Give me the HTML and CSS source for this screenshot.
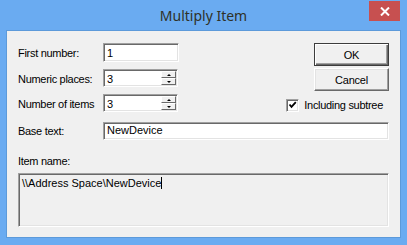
FILE: index.html
```html
<!DOCTYPE html>
<html lang="en">
<head>
    <meta charset="UTF-8">
    <meta name="viewport" content="width=device-width, initial-scale=1.0">
    <title>Multiply Item</title>
    <link rel="stylesheet" href="styles.css">
</head>
<body>
    <div class="window">
        <div class="titlebar">
            <span class="title">Multiply Item</span>
            <button class="close" aria-label="Close">
                <svg width="10" height="9" viewBox="0 0 10 9">
                    <path d="M1 0.5 L9 8.5 M9 0.5 L1 8.5" stroke="#fff" stroke-width="2"/>
                </svg>
            </button>
        </div>
        <div class="client">
            <div class="top">
                <div class="fields">
                    <label>First number:</label>
                    <div class="edit first">1</div>
                    <label>Numeric places:</label>
                    <div class="edit spin">
                        <span>3</span>
                        <span class="spinbtns">
                            <span class="sbtn"><i class="up"></i></span>
                            <span class="sbtn"><i class="down"></i></span>
                        </span>
                    </div>
                    <label>Number of items</label>
                    <div class="edit spin">
                        <span>3</span>
                        <span class="spinbtns">
                            <span class="sbtn"><i class="up"></i></span>
                            <span class="sbtn"><i class="down"></i></span>
                        </span>
                    </div>
                </div>
                <div class="actions">
                    <button class="btn default">OK</button>
                    <button class="btn">Cancel</button>
                    <label class="check">
                        <span class="box">
                            <svg width="9" height="9" viewBox="0 0 9 9">
                                <path d="M1.5 3.5 L3.5 5.8 L7.8 1.2" fill="none" stroke="#000" stroke-width="1.8"/>
                            </svg>
                        </span>
                        Including subtree
                    </label>
                </div>
            </div>
            <div class="base">
                <label>Base text:</label>
                <div class="edit wide">NewDevice</div>
            </div>
            <label class="itemlabel">Item name:</label>
            <div class="memo">\\Address Space\NewDevice<span class="caret"></span></div>
        </div>
    </div>
</body>
</html>
```

FILE: styles.css
```css
body {
    margin: 0;
    background-color: rgb(106, 171, 241);
    font-family: "Liberation Sans", Arial, sans-serif;
    font-size: 11px;
    color: #000;
}
.window {
    width: 407px;
    height: 245px;
    display: flex;
    flex-direction: column;
}
.titlebar {
    height: 31px;
    display: grid;
    grid-template-columns: 1fr auto 1fr;
}
.title {
    grid-column: 2;
    font-family: "Noto Sans", sans-serif;
    font-size: 14px;
    line-height: 31px;
    color: #2f3128;
}
.close {
    grid-column: 3;
    justify-self: end;
    align-self: start;
    margin: 1px 7px 0 0;
    width: 31px;
    height: 20px;
    padding: 0;
    border: 0;
    background-color: rgb(199, 80, 80);
    display: flex;
    align-items: center;
    justify-content: center;
}
.client {
    margin: 0 7px;
    height: 206px;
    box-sizing: border-box;
    background-color: #f0f0f0;
    padding: 12px 11px 0 11px;
    outline: 1px solid rgb(92, 154, 218);
}
.top {
    display: flex;
    justify-content: space-between;
}
.fields {
    display: grid;
    grid-template-columns: 85px 76px;
    row-gap: 7px;
    align-items: start;
}
label {
    letter-spacing: -0.3px;
    line-height: 13px;
}
.fields label {
    padding-top: 4px;
}
.edit {
    box-sizing: border-box;
    height: 18px;
    background-color: #fff;
    border: 1px solid;
    border-color: #a0a0a0 #fff #fff #a0a0a0;
    box-shadow: inset 1px 1px 0 #696969, inset -1px -1px 0 #e3e3e3;
    padding: 3px 2px 0 3px;
    line-height: 13px;
}
.edit.first {
    height: 19px;
}
.edit.spin {
    width: 75px;
    display: flex;
    justify-content: space-between;
    padding: 0 1px 0 3px;
}
.edit.spin > span:first-child {
    padding-top: 3px;
}
.spinbtns {
    display: flex;
    flex-direction: column;
    width: 15px;
    height: 14px;
    margin-top: 1px;
}
.sbtn {
    box-sizing: border-box;
    height: 7px;
    background-color: #f0f0f0;
    border: 1px solid;
    border-color: #fff #696969 #696969 #fff;
    display: flex;
    align-items: center;
    justify-content: center;
}
.up {
    border-left: 2px solid transparent;
    border-right: 2px solid transparent;
    border-bottom: 2px solid #000;
}
.down {
    border-left: 2px solid transparent;
    border-right: 2px solid transparent;
    border-top: 2px solid #000;
}
.actions {
    display: flex;
    flex-direction: column;
    align-items: flex-end;
}
.btn {
    box-sizing: border-box;
    width: 75px;
    height: 23px;
    padding: 0;
    margin-bottom: 2px;
    background-color: #f0f0f0;
    border: 1px solid;
    border-color: #fff #696969 #696969 #fff;
    box-shadow: inset -1px -1px 0 #a0a0a0, inset 1px 1px 0 #e3e3e3;
    font-family: inherit;
    font-size: 11px;
    letter-spacing: -0.2px;
    color: #000;
}
.btn.default {
    border-color: #3c3c3c;
    box-shadow: inset 1px 1px 0 #fff, inset -1px -1px 0 #696969, inset -2px -2px 0 #a0a0a0;
}
.check {
    display: flex;
    align-items: center;
    gap: 5px;
    margin-top: 6px;
    margin-right: 6px;
    height: 13px;
}
.box {
    box-sizing: border-box;
    width: 13px;
    height: 13px;
    background-color: #fff;
    border: 1px solid;
    border-color: #a0a0a0 #fff #fff #a0a0a0;
    box-shadow: inset 1px 1px 0 #696969, inset -1px -1px 0 #e3e3e3;
    display: flex;
    align-items: center;
    justify-content: center;
}
.base {
    display: flex;
    margin-top: 10px;
}
.base label {
    width: 85px;
    flex: none;
    padding-top: 3px;
}
.edit.wide {
    flex: 1;
    padding-top: 1px;
}
.itemlabel {
    display: block;
    margin-top: 15px;
}
.memo {
    box-sizing: border-box;
    margin-top: 5px;
    height: 54px;
    background-color: #f0f0f0;
    border: 1px solid;
    border-color: #a0a0a0 #fff #fff #a0a0a0;
    box-shadow: inset 1px 1px 0 #696969, inset -1px -1px 0 #e3e3e3;
    padding: 3px 3px 0 3px;
    line-height: 13px;
}
.caret {
    display: inline-block;
    width: 1px;
    height: 12px;
    background-color: #000;
    vertical-align: -2px;
}
```
